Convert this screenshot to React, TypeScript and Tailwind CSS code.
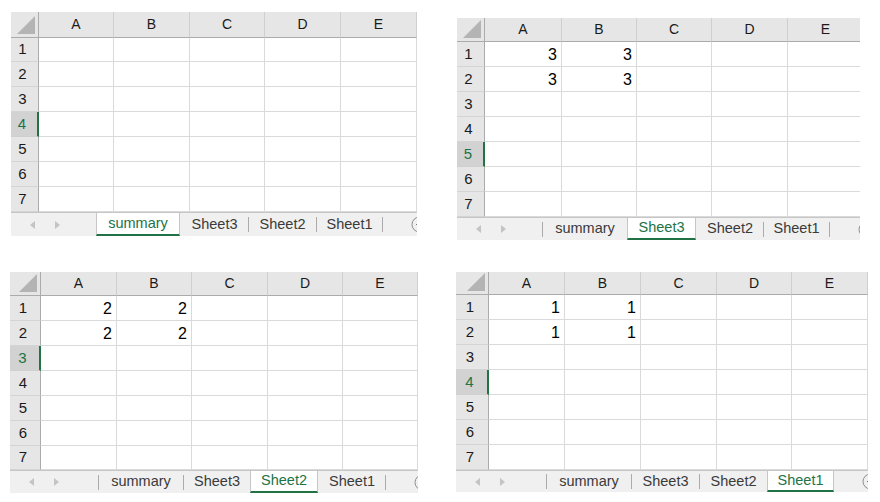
import React from "react";

const COLS = ["A", "B", "C", "D", "E"];
const TABS = ["summary", "Sheet3", "Sheet2", "Sheet1"];
const ROWS = [1, 2, 3, 4, 5, 6, 7];

type Panel = {
  box: string;
  grid: string;
  tabBar: string;
  left: string;
  tabWs: string[];
  active: number;
  selected: number;
  value?: string;
};

// one screenshot per sheet, each cropped a little differently
const PANELS: Panel[] = [
  {
    box: "ml-[11px] mt-[12px] w-[406px]",
    grid: "grid-cols-[28px_75px_76px_75px_76px_76px] grid-rows-[26px_24px_25px_25px_25px_25px_25px_25px]",
    tabBar: "h-[24px]",
    left: "w-[85px]",
    tabWs: ["w-[84px]", "w-[68px]", "w-[68px]", "w-[67px]"],
    active: 0,
    selected: 4,
  },
  {
    box: "ml-[40px] mt-[18px] w-[403px]",
    grid: "grid-cols-[28px_77px_75px_75px_76px_76px] grid-rows-[24px_25px_25px_25px_25px_25px_25px_25px]",
    tabBar: "h-[23px]",
    left: "w-[85px]",
    tabWs: ["w-[85px]", "w-[69px]", "w-[67px]", "w-[67px]"],
    active: 1,
    selected: 5,
    value: "3",
  },
  {
    box: "ml-[10px] w-[408px]",
    grid: "grid-cols-[31px_76px_75px_76px_75px_75px] grid-rows-[24px_25px_25px_25px_25px_25px_25px_24px]",
    tabBar: "h-[23px]",
    left: "w-[88px]",
    tabWs: ["w-[85px]", "w-[67px]", "w-[68px]", "w-[68px]"],
    active: 2,
    selected: 3,
    value: "2",
  },
  {
    box: "ml-[38px] w-[412px]",
    grid: "grid-cols-[33px_76px_76px_76px_75px_76px] grid-rows-[23px_25px_25px_25px_25px_25px_25px_25px]",
    tabBar: "h-[22px]",
    left: "w-[90px]",
    tabWs: ["w-[85px]", "w-[68px]", "w-[68px]", "w-[67px]"],
    active: 3,
    selected: 4,
    value: "1",
  },
];

const Sep = () => <span className="w-px h-[15px] bg-[#ababab] shrink-0" />;

function Sheet({ p }: { p: Panel }) {
  return (
    <div className={`${p.box} overflow-hidden flex flex-col`}>
      <div className={`grid ${p.grid} w-max`}>
        {/* select-all corner */}
        <div className="bg-[#e6e6e6] border-r border-b border-[#ababab] flex items-end justify-end p-[3px]">
          <svg width="18" height="18" viewBox="0 0 18 18">
            <polygon points="18,0 18,18 0,18" fill="#b4b4b4" />
          </svg>
        </div>
        {COLS.map((c) => (
          <div
            key={c}
            className="bg-[#e6e6e6] border-r border-r-[#cfcfcf] border-b border-b-[#ababab] flex items-center justify-center text-[14px] text-[#1a1a1a]"
          >
            {c}
          </div>
        ))}
        {ROWS.map((r) => (
          <React.Fragment key={r}>
            {r === p.selected ? (
              <div className="bg-[#d2d2d2] border-r-2 border-r-[#217346] border-b border-b-[#cfcfcf] flex items-center justify-center pr-[4px] text-[15px] text-[#217346]">
                {r}
              </div>
            ) : (
              <div className="bg-[#e6e6e6] border-r border-r-[#ababab] border-b border-b-[#d4d4d4] flex items-center justify-center pr-[4px] text-[15px] text-[#1a1a1a]">
                {r}
              </div>
            )}
            {COLS.map((c, ci) => (
              <div
                key={c}
                className="bg-white border-r border-b border-[#dadada] flex items-center justify-end pr-[4px] pt-[2px] text-[16px] text-black"
              >
                {p.value && r <= 2 && ci < 2 ? p.value : ""}
              </div>
            ))}
          </React.Fragment>
        ))}
      </div>

      {/* sheet tabs */}
      <div className={`${p.tabBar} bg-[#f0f0f0] border-t border-[#c6c6c6] flex items-stretch`}>
        <div className={`${p.left} shrink-0 flex items-center pl-[19px] gap-[20px]`}>
          <svg width="5" height="8" viewBox="0 0 5 8">
            <polygon points="5,0 5,8 0,4" fill="#c4c4c4" />
          </svg>
          <svg width="5" height="8" viewBox="0 0 5 8">
            <polygon points="0,0 0,8 5,4" fill="#c4c4c4" />
          </svg>
        </div>
        {TABS.map((t, i) => {
          const isActive = i === p.active;
          const last = i === TABS.length - 1;
          if (isActive) {
            return (
              <div
                key={t}
                className={`${p.tabWs[i]} shrink-0 bg-white border-x border-[#c6c6c6] border-b-2 border-b-[#217346] flex items-center justify-center text-[14.5px] text-[#217346]`}
              >
                {t}
              </div>
            );
          }
          return (
            <div key={t} className={`${p.tabWs[i]} shrink-0 flex items-center text-[14.5px] text-[#3a3a3a]`}>
              {i - 1 !== p.active ? <Sep /> : <span className="w-px shrink-0" />}
              <span className="flex-1 text-center">{t}</span>
              {last && <Sep />}
            </div>
          );
        })}
        {/* new sheet button, cut by the crop */}
        <div className="ml-[28px] shrink-0 flex items-center">
          <svg width="17" height="17" viewBox="0 0 17 17">
            <circle cx="8.5" cy="8.5" r="7.5" fill="none" stroke="#8c8c8c" strokeWidth="1" />
            <path d="M8.5 5v7M5 8.5h7" stroke="#777" strokeWidth="1" />
          </svg>
        </div>
      </div>
    </div>
  );
}

export default function App() {
  return (
    <div className="w-[880px] h-[502px] bg-white font-['Liberation_Sans',Arial,sans-serif] overflow-hidden">
      <div className="flex items-start h-[272px]">
        <Sheet p={PANELS[0]} />
        <Sheet p={PANELS[1]} />
      </div>
      <div className="flex items-start">
        <Sheet p={PANELS[2]} />
        <Sheet p={PANELS[3]} />
      </div>
    </div>
  );
}
